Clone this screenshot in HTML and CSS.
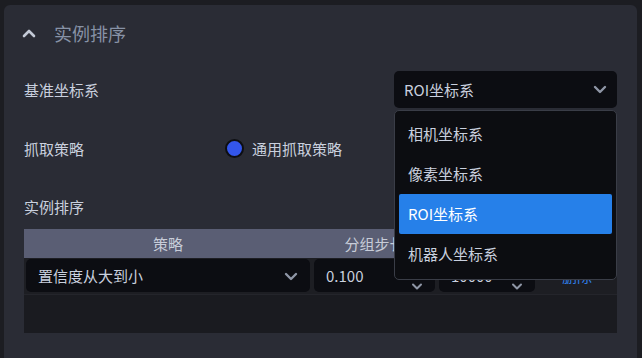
FILE: index.html
```html
<!DOCTYPE html>
<html>
  <head>
    <title>实例排序</title>
    <meta charset="utf-8" />
    <link rel="stylesheet" href="styles.css">
  </head>
  <body>
    <div class="panel">
      <div class="panel_header">
        <svg class="header_arrow" width="14" height="10" viewBox="0 0 14 10">
          <path d="M2 8 L7 3 L12 8" fill="none" stroke="#c3c9d6" stroke-width="2.6" stroke-linecap="round" stroke-linejoin="round" />
        </svg>
        <span class="panel_title">实例排序</span>
      </div>

      <div class="form_row row_coord">
        <span class="label">基准坐标系</span>
        <div class="select_wrap">
          <div class="select coord_select">
            <span>ROI坐标系</span>
            <svg class="chevron" width="14" height="10" viewBox="0 0 14 10">
              <path d="M2 3 L7 8 L12 3" fill="none" stroke="#8f96a6" stroke-width="2.4" stroke-linecap="round" stroke-linejoin="round" />
            </svg>
          </div>
          <ul class="dropdown">
            <li>相机坐标系</li>
            <li>像素坐标系</li>
            <li class="active">ROI坐标系</li>
            <li>机器人坐标系</li>
          </ul>
        </div>
      </div>

      <div class="form_row row_grab">
        <span class="label label_fixed">抓取策略</span>
        <span class="radio"></span>
        <span class="radio_text">通用抓取策略</span>
      </div>

      <div class="section_label">实例排序</div>

      <div class="table">
        <div class="table_head">
          <div class="col col_strategy">策略</div>
          <div class="col col_step">分组步长</div>
          <div class="col col_max">最大数量</div>
          <div class="col col_op">操作</div>
        </div>
        <div class="table_row">
          <div class="col col_strategy">
            <div class="select cell_select">
              <span>置信度从大到小</span>
              <svg class="chevron" width="14" height="10" viewBox="0 0 14 10">
                <path d="M2 3 L7 8 L12 3" fill="none" stroke="#8f96a6" stroke-width="2.4" stroke-linecap="round" stroke-linejoin="round" />
              </svg>
            </div>
          </div>
          <div class="col col_step">
            <div class="select cell_select">
              <span>0.100</span>
              <div class="spin">
                <svg width="12" height="7" viewBox="0 0 12 7">
                  <path d="M2 5.5 L6 1.5 L10 5.5" fill="none" stroke="#8f96a6" stroke-width="2" stroke-linecap="round" stroke-linejoin="round" />
                </svg>
                <svg width="12" height="7" viewBox="0 0 12 7">
                  <path d="M2 1.5 L6 5.5 L10 1.5" fill="none" stroke="#8f96a6" stroke-width="2" stroke-linecap="round" stroke-linejoin="round" />
                </svg>
              </div>
            </div>
          </div>
          <div class="col col_max">
            <div class="select cell_select">
              <span>10000</span>
              <div class="spin">
                <svg width="12" height="7" viewBox="0 0 12 7">
                  <path d="M2 5.5 L6 1.5 L10 5.5" fill="none" stroke="#8f96a6" stroke-width="2" stroke-linecap="round" stroke-linejoin="round" />
                </svg>
                <svg width="12" height="7" viewBox="0 0 12 7">
                  <path d="M2 1.5 L6 5.5 L10 1.5" fill="none" stroke="#8f96a6" stroke-width="2" stroke-linecap="round" stroke-linejoin="round" />
                </svg>
              </div>
            </div>
          </div>
          <div class="col col_op">
            <a class="delete_link" href="#">删除</a>
          </div>
        </div>
        <div class="table_empty"></div>
      </div>
    </div>
  </body>
</html>
```

FILE: styles.css
```css
* {
  margin: 0;
  padding: 0;
  box-sizing: border-box;
}

body {
  background-color: #1c1d22;
  color: #c9d0de;
  font-family: "Noto Sans CJK SC", "Noto Sans", sans-serif;
  font-size: 15px;
  overflow: hidden;
}

.panel {
  background-color: #2a2c35;
  margin: 5px 0 0 4px;
  width: 633px;
  height: 360px;
  border-radius: 6px 6px 0 0;
  padding: 0 20px;
}

.panel_header {
  display: flex;
  align-items: center;
  height: 55px;
  margin-left: -2px;
}

.header_arrow {
  display: block;
}

.panel_title {
  margin-left: 18px;
  font-size: 18px;
  color: #8792a6;
}

.form_row {
  display: flex;
  align-items: center;
}

.row_coord {
  height: 58px;
  justify-content: space-between;
}

.row_grab {
  height: 60px;
}

.label_fixed {
  width: 201px;
}

.select_wrap {
  position: relative;
}

.select {
  display: flex;
  align-items: center;
  justify-content: space-between;
  background-color: #0c0d12;
  border-radius: 5px;
  color: #c9d0de;
}

.coord_select {
  width: 223px;
  height: 37px;
  padding: 0 10px;
}

.dropdown {
  position: absolute;
  top: 39px;
  left: 0;
  width: 223px;
  list-style: none;
  background-color: #0c0d11;
  border: 1px solid #3a3d47;
  border-radius: 5px;
  padding: 3px 4px 5px 4px;
  z-index: 10;
}

.dropdown li {
  height: 40px;
  line-height: 40px;
  padding-left: 9px;
  border-radius: 2px;
}

.dropdown li.active {
  background-color: #2680e9;
  color: #ffffff;
}

.radio {
  width: 19px;
  height: 19px;
  border-radius: 50%;
  background-color: #3356ea;
  border: 2px solid #0d0e12;
}

.radio_text {
  margin-left: 8px;
}

.section_label {
  padding-top: 18px;
  line-height: 22px;
  margin-bottom: 11px;
}

.table {
  width: 593px;
  background-color: #1a1b20;
  height: 104px;
}

.table_head {
  display: flex;
  height: 29px;
  background-color: #5a5e74;
  color: #c8cdd9;
}

.table_head .col {
  line-height: 29px;
  text-align: center;
}

.col_strategy {
  width: 288px;
}

.col_step {
  width: 125px;
}

.col_max {
  width: 100px;
}

.col_op {
  width: 80px;
}

.table_row {
  display: flex;
  height: 37px;
  background-color: #1d1e23;
  border-bottom: 1px solid #24252b;
}

.table_row .col {
  padding: 1px 2px 2px 2px;
}

.cell_select {
  height: 33px;
  padding: 0 12px 0 12px;
}

.spin {
  display: flex;
  flex-direction: column;
  gap: 8px;
  margin-top: 6px;
}

.spin svg {
  display: block;
}

.col_op {
  display: flex;
  align-items: center;
  justify-content: center;
}

.delete_link {
  color: #2f7de6;
  text-decoration: none;
}
```
